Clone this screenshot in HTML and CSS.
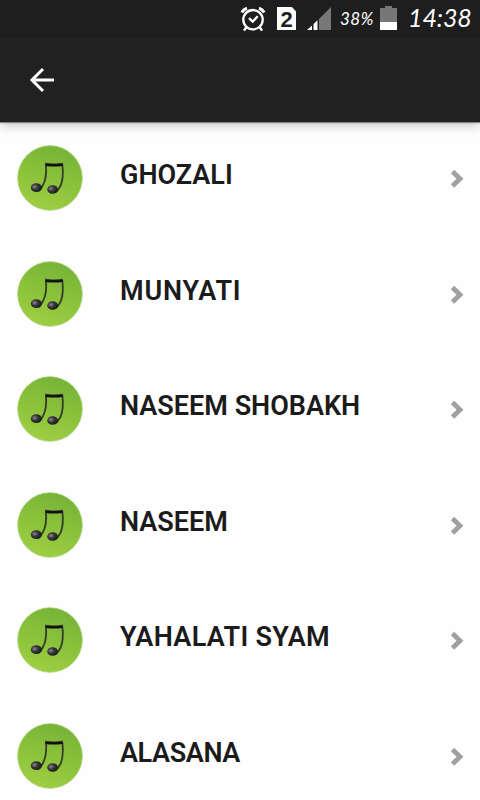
FILE: index.html
```html
<!DOCTYPE html>
<html lang="en">
<head>
<meta charset="utf-8">
<title>Music list</title>
<link rel="stylesheet" href="styles.css">
</head>
<body>
<svg class="defs" aria-hidden="true">
  <defs>
    <linearGradient id="green" x1="0.7" y1="0" x2="0.35" y2="1"><stop offset="0" stop-color="#74b238"/><stop offset="0.45" stop-color="#88c039"/><stop offset="1" stop-color="#9fce43"/></linearGradient>
    <linearGradient id="beam" x1="0" y1="0" x2="0" y2="1"><stop offset="0" stop-color="#555"/><stop offset="0.5" stop-color="#111"/></linearGradient>
    <radialGradient id="ball" cx="0.35" cy="0.4" r="0.6"><stop offset="0" stop-color="#8c8c90"/><stop offset="0.5" stop-color="#38383a"/><stop offset="1" stop-color="#1c1f1a"/></radialGradient>
    <symbol id="note" viewBox="0 0 68 68">
      <circle cx="34" cy="34" r="32.3" fill="url(#green)" stroke="#a5cf70" stroke-width="0.8"/>
      <path d="M30 20Q31 34 27 41Q25 45 22.500 47M46.300 20Q48 34 44.500 42Q42 46.500 39 48.500" fill="none" stroke="#333d2b" stroke-width="1.8"/>
      <path d="M29 18.500Q38 20.700 47 18.500L46.500 22Q38 23.200 29.500 22Z" fill="url(#beam)"/>
      <ellipse cx="20.300" cy="43.700" rx="5.500" ry="4.400" fill="url(#ball)"/>
      <ellipse cx="36.600" cy="45.500" rx="5.400" ry="4.300" fill="url(#ball)"/>
    </symbol>
    <symbol id="chevron" viewBox="0 0 18 22"><path d="M4.500 3.500L12 10.700L4.500 18" fill="none" stroke="#a0a0a0" stroke-width="4.800"/></symbol>
  </defs>
</svg>
<header class="top">
  <div class="status">
    <svg class="alarm" viewBox="0 0 26 26"><g fill="none" stroke="#fff"><circle cx="13" cy="13.700" r="9.700" stroke-width="2.300"/><path d="M9 12.200L12.700 15.700L17.700 10.200" stroke-width="2.300"/><path d="M1.800 6.500Q3.700 3.200 7 2.200M24.200 6.500Q22.300 3.200 19 2.200" stroke-width="3"/><path d="M6.500 21L4 24.700M19.500 21L22 24.700" stroke-width="2.400"/></g></svg>
    <span class="sim">2</span>
    <svg class="signal" viewBox="0 0 24 23"><path d="M12 12L24 0V23H12Z" fill="#777"/><path d="M0 23L5 18.500V23ZM6.500 17L10.500 13.300V23H6.500Z" fill="#fff"/></svg>
    <span class="percent">38%</span>
    <svg class="battery" viewBox="0 0 17 24"><path d="M5 0H12V2H17V16H0V2H5Z" fill="#777"/><path d="M0 16H17V24H0Z" fill="#fff"/></svg>
    <span class="clock">14:38</span>
  </div>
  <nav class="bar"><svg class="back" viewBox="0 0 26 26"><path d="M14 2L3 13L14 24M3 13H25" fill="none" stroke="#fff" stroke-width="3"/></svg></nav>
</header>
<main class="list">
  <div class="row"><svg class="disc"><use href="#note"/></svg><span class="name">GHOZALI</span><svg class="next"><use href="#chevron"/></svg></div>
  <div class="row"><svg class="disc"><use href="#note"/></svg><span class="name wide">MUNYATI</span><svg class="next"><use href="#chevron"/></svg></div>
  <div class="row"><svg class="disc"><use href="#note"/></svg><span class="name">NASEEM SHOBAKH</span><svg class="next"><use href="#chevron"/></svg></div>
  <div class="row"><svg class="disc"><use href="#note"/></svg><span class="name">NASEEM</span><svg class="next"><use href="#chevron"/></svg></div>
  <div class="row"><svg class="disc"><use href="#note"/></svg><span class="name loose">YAHALATI SYAM</span><svg class="next"><use href="#chevron"/></svg></div>
  <div class="row"><svg class="disc"><use href="#note"/></svg><span class="name tight">ALASANA</span><svg class="next"><use href="#chevron"/></svg></div>
</main>
</body>
</html>
```
FILE: styles.css
```css
* { box-sizing: border-box; }
body { margin: 0; height: 800px; overflow: hidden; background: #fefefe; font-family: Roboto, "Liberation Sans", sans-serif; }
svg { display: block; flex: none; }
.defs { position: absolute; width: 0; height: 0; }
.top { position: relative; height: 122px; background: #212121; box-shadow: 0 1px 1px rgba(0,0,0,.4), 0 2px 12px rgba(0,0,0,.28); color: #fff; }
.status { display: flex; height: 38px; padding-left: 240px; background: #1e1e1e; }
.alarm { width: 26px; height: 26px; margin-top: 6px; }
.sim { width: 19px; height: 23px; margin: 7px 0 0 11px; background: #fff; color: #1e1e1e; font: bold 22px/25px "Liberation Sans", sans-serif; text-align: center; clip-path: polygon(0 0, 78% 0, 100% 18%, 100% 100%, 0 100%); }
.signal { width: 24px; height: 23px; margin: 7px 0 0 11px; }
.percent { width: 35px; margin: 9px 0 0 9px; font: italic 17px/20px Lato, sans-serif; letter-spacing: .5px; white-space: nowrap; }
.battery { width: 17px; height: 24px; margin: 6px 0 0 5px; }
.clock { margin: 1px 0 0 11px; font: italic 25px/32px Lato, sans-serif; letter-spacing: -.1px; white-space: nowrap; }
.bar { display: flex; align-items: center; height: 84px; padding-left: 29px; }
.back { width: 26px; height: 26px; }
.list { padding-top: 22px; }
.row { display: flex; align-items: flex-start; height: 115.5px; padding: 0 14px 0 15.5px; }
.disc { width: 68px; height: 68px; }
.name { flex: 1; margin: 15px 0 0 36.5px; color: #1b1b1b; font-size: 27px; line-height: 32px; font-weight: 600; white-space: nowrap; }
.wide { letter-spacing: .8px; }
.loose { letter-spacing: .32px; }
.tight { letter-spacing: -.4px; }
.next { width: 18px; height: 22px; margin-top: 24px; }
```
